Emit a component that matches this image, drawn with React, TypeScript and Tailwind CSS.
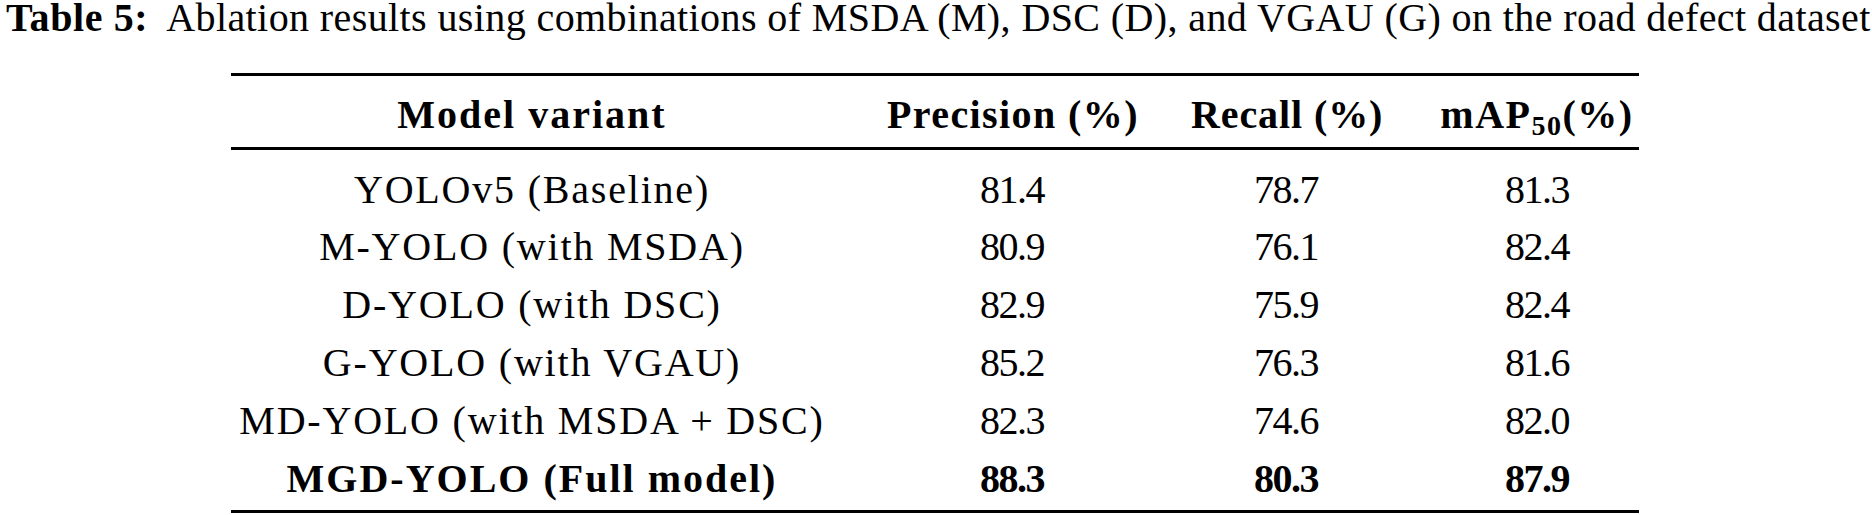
import React from 'react'

type Row = {
  name: string
  precision: string
  recall: string
  map50: string
  bold?: boolean
}

const rows: Row[] = [
  { name: 'YOLOv5 (Baseline)', precision: '81.4', recall: '78.7', map50: '81.3' },
  { name: 'M-YOLO (with MSDA)', precision: '80.9', recall: '76.1', map50: '82.4' },
  { name: 'D-YOLO (with DSC)', precision: '82.9', recall: '75.9', map50: '82.4' },
  { name: 'G-YOLO (with VGAU)', precision: '85.2', recall: '76.3', map50: '81.6' },
  { name: 'MD-YOLO (with MSDA + DSC)', precision: '82.3', recall: '74.6', map50: '82.0' },
  { name: 'MGD-YOLO (Full model)', precision: '88.3', recall: '80.3', map50: '87.9', bold: true },
]

const cols = 'grid grid-cols-[602px_250px_190px_204px] gap-x-[54px] whitespace-nowrap text-center'

export default function App() {
  return (
    <div className="h-[515px] w-[1872px] overflow-hidden bg-white font-['Liberation_Serif',serif] text-[40px] text-black">
      <p className="whitespace-nowrap pl-[6px] leading-[36px]">
        <span className="font-bold tracking-[0.6px]">Table 5:</span>
        <span className="pl-[18px] tracking-[0.4px]">
          Ablation results using combinations of MSDA (M), DSC (D), and VGAU (G) on the road defect dataset
        </span>
      </p>

      <div className="ml-[231px] mt-[37px] w-[1408px]">
        <div className="h-[3px] bg-black" />

        <div className={`${cols} pb-[12.5px] pt-[18.5px] font-bold leading-[40px]`}>
          <div className="tracking-[2px]">Model variant</div>
          <div className="tracking-[1.4px]">Precision (%)</div>
          <div className="tracking-[0.9px]">Recall (%)</div>
          <div className="tracking-[1.5px]">
            mAP<sub className="text-[28px]">50</sub>(%)
          </div>
        </div>

        <div className="h-[3px] bg-black" />

        <div className="pt-[10.6px]">
          {rows.map((r) => (
            <div
              key={r.name}
              className={`${cols} leading-[57.8px] ${r.bold ? 'font-bold' : ''}`}
            >
              <div className={r.bold ? 'tracking-[2px]' : 'tracking-[1.8px]'}>{r.name}</div>
              <div className="tracking-[-1.5px]">{r.precision}</div>
              <div className="tracking-[-1.5px]">{r.recall}</div>
              <div className="tracking-[-1.5px]">{r.map50}</div>
            </div>
          ))}
        </div>

        <div className="mt-[2.6px] h-[3px] bg-black" />
      </div>
    </div>
  )
}
